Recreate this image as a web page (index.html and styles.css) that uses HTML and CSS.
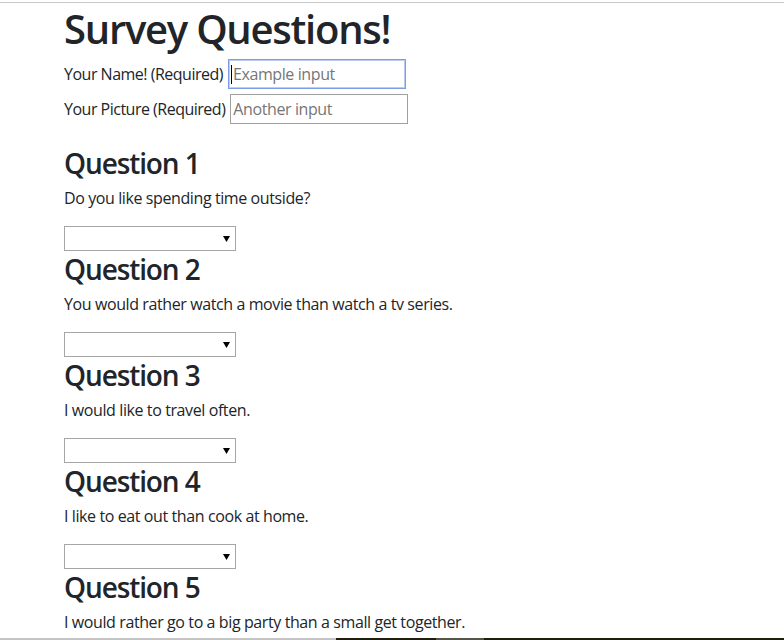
FILE: index.html
```html
<!DOCTYPE html>
<html lang="en">
<head>
<meta charset="utf-8">
<title>Survey</title>
<link rel="stylesheet" href="styles.css">
</head>
<body>
<main class="page">
  <h1 class="title">Survey Questions!</h1>
  <div class="field">
    <label class="field-label">Your Name! (Required)</label>
    <span class="input focused"><span class="caret"></span><span class="ph">Example input</span></span>
  </div>
  <div class="field">
    <label class="field-label">Your Picture (Required)</label>
    <span class="input"><span class="ph">Another input</span></span>
  </div>

  <section class="question first">
    <h2 class="q-title">Question 1</h2>
    <p class="q-text">Do you like spending time outside?</p>
    <div class="select"><svg class="arrow" width="7" height="6" viewBox="0 0 7 6"><polygon points="0,0 7,0 3.5,6" fill="#000"/></svg></div>
  </section>
  <section class="question">
    <h2 class="q-title">Question 2</h2>
    <p class="q-text">You would rather watch a movie than watch a tv series.</p>
    <div class="select"><svg class="arrow" width="7" height="6" viewBox="0 0 7 6"><polygon points="0,0 7,0 3.5,6" fill="#000"/></svg></div>
  </section>
  <section class="question">
    <h2 class="q-title">Question 3</h2>
    <p class="q-text">I would like to travel often.</p>
    <div class="select"><svg class="arrow" width="7" height="6" viewBox="0 0 7 6"><polygon points="0,0 7,0 3.5,6" fill="#000"/></svg></div>
  </section>
  <section class="question">
    <h2 class="q-title">Question 4</h2>
    <p class="q-text">I like to eat out than cook at home.</p>
    <div class="select"><svg class="arrow" width="7" height="6" viewBox="0 0 7 6"><polygon points="0,0 7,0 3.5,6" fill="#000"/></svg></div>
  </section>
  <section class="question">
    <h2 class="q-title">Question 5</h2>
    <p class="q-text">I would rather go to a big party than a small get together.</p>
    <div class="select"><svg class="arrow" width="7" height="6" viewBox="0 0 7 6"><polygon points="0,0 7,0 3.5,6" fill="#000"/></svg></div>
  </section>
</main>
<div class="bottom-strip">
  <span class="strip-grey"></span>
  <span class="strip-dark"></span>
  <span class="strip-mid"></span>
  <span class="strip-dark2"></span>
</div>
</body>
</html>
```
FILE: styles.css
```css
html, body {
  margin: 0;
  padding: 0;
  background: #fff;
  height: 100%;
  overflow: hidden;
}
body {
  font-family: "Open Sans", "Noto Sans", sans-serif;
  color: #212529;
  font-size: 16px;
  line-height: 24px;
  border-top: 1px solid #c8c8c8;
  margin-top: 2px;
}
.page {
  padding: 0 0 0 64px;
}
.title {
  font-size: 40px;
  line-height: 48px;
  font-weight: 600;
  margin: 2px 0 6px;
  letter-spacing: -1.25px;
}
.field {
  display: flex;
  align-items: center;
  gap: 5px;
  height: 30px;
  margin-bottom: 5px;
  letter-spacing: -0.5px;
}
.input {
  display: flex;
  align-items: center;
  box-sizing: border-box;
  width: 178px;
  height: 30px;
  border: 1px solid #a0a0a0;
  padding: 0 2px;
  letter-spacing: -0.4px;
}
.input.focused {
  border: 1px solid #7b9de6;
  box-shadow: 0 0 0 1px #b9cdf3 inset;
}
.caret {
  width: 1px;
  height: 19px;
  background: #000;
  margin-right: 1px;
}
.ph {
  color: #767676;
}
.question.first {
  margin-top: 22px;
}
.q-title {
  font-size: 28px;
  line-height: 35px;
  font-weight: 600;
  margin: 1px 0 5px;
  letter-spacing: -1.1px;
}
.q-text {
  margin: 0 0 16px;
  letter-spacing: -0.4px;
}
.select {
  box-sizing: border-box;
  width: 172px;
  height: 25px;
  border: 1px solid #a6a6a6;
  display: flex;
  justify-content: flex-end;
  align-items: center;
  padding-right: 5px;
}
.arrow {
  display: block;
}
.bottom-strip {
  position: fixed;
  left: 0;
  right: 0;
  bottom: 0;
  height: 2px;
  display: flex;
}
.strip-grey { width: 336px; background: #c4c4c4; }
.strip-dark { width: 100px; background: #1f1d0c; }
.strip-mid { width: 48px; background: #55554a; }
.strip-dark2 { flex: 1; background: #1f1d0c; }
```
